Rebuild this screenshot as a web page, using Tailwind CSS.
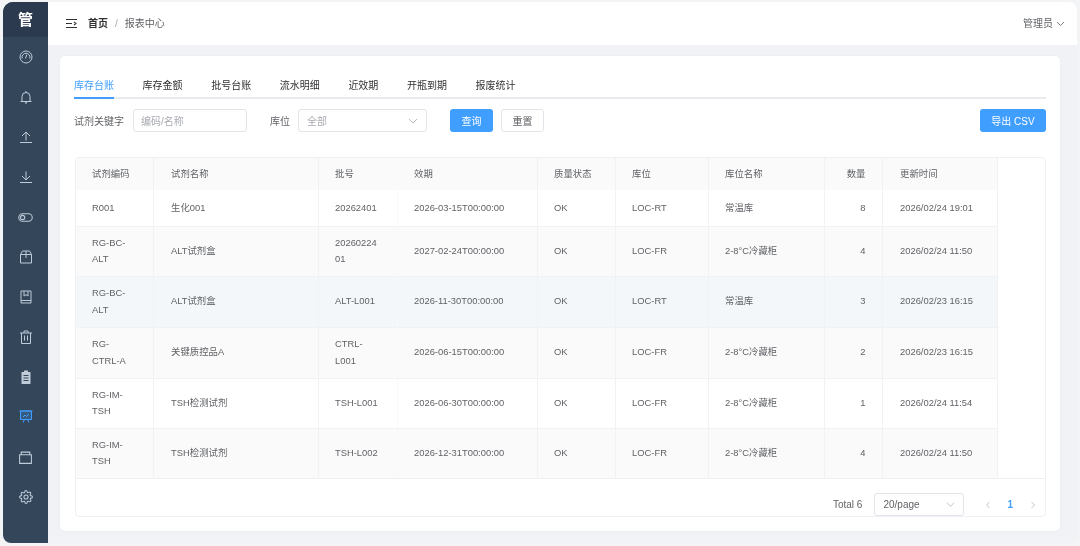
<!DOCTYPE html>
<html lang="zh">
<head>
<meta charset="utf-8">
<script src="https://cdn.jsdelivr.net/npm/@tailwindcss/browser@4"></script>
<title>报表中心</title>
</head>
<body class="m-0 bg-[#f3f4f5]">
<div class="h-[546px] w-[1080px] overflow-hidden pt-[2px] pr-[3px] pb-[3px] pl-[3px] font-['Liberation_Sans','Noto_Sans_CJK_SC',sans-serif] blur-[0.35px]">
  <div class="flex h-full overflow-hidden rounded-tl-[10px] rounded-tr-[8px] rounded-bl-[8px] rounded-br-[8px] bg-[#f0f2f5]">
    <aside class="flex w-[45px] shrink-0 flex-col bg-[#33465a]">
      <div class="flex h-[35px] items-center justify-center bg-[#2b3a4e] pt-[1px] text-[15px] font-bold text-white">管</div>
      <nav class="flex flex-col items-center text-[#bfcbd9]">
        <span class="flex h-[40px] items-center"><svg class="size-[14px]" viewBox="0 0 14 14" fill="none" stroke="currentColor" stroke-width="1"><circle cx="7" cy="7" r="6"/><path d="M3.200 8.500a4 4 0 1 1 7.600 0M7.800 4.600 6.600 8.400"/></svg></span>
        <span class="flex h-[40px] items-center"><svg class="size-[14px]" viewBox="0 0 14 14" fill="none" stroke="currentColor" stroke-width="1"><path d="M1.500 11.500h11M3 11.500V6.500a4 4 0 0 1 8 0v5M7 1v1.500"/><circle cx="7" cy="12.800" r=".6"/></svg></span>
        <span class="flex h-[40px] items-center"><svg class="size-[14px]" viewBox="0 0 14 14" fill="none" stroke="currentColor" stroke-width="1"><path d="M1 12.500h12M7 10.500V2.500M3 6l4-4 4 4"/></svg></span>
        <span class="flex h-[40px] items-center"><svg class="size-[14px]" viewBox="0 0 14 14" fill="none" stroke="currentColor" stroke-width="1"><path d="M1 12.500h12M7 1.500v8M3 6l4 4 4-4"/></svg></span>
        <span class="flex h-[40px] items-center"><svg class="size-[15px]" viewBox="0 0 14 14" fill="none" stroke="currentColor" stroke-width="1"><rect x=".7" y="3.500" width="12.600" height="7" rx="3.500"/><circle cx="4.300" cy="7" r="2"/></svg></span>
        <span class="flex h-[40px] items-center"><svg class="size-[14px]" viewBox="0 0 14 14" fill="none" stroke="currentColor" stroke-width="1"><path d="M1.500 4.500v8.500h11V4.500L10.500 1h-7zM1.500 4.500h11M7 1v7"/></svg></span>
        <span class="flex h-[40px] items-center"><svg class="size-[14px]" viewBox="0 0 14 14" fill="none" stroke="currentColor" stroke-width="1"><path d="M2 1h10v12H2zM2 10.500h10M5 1v5l2-1.300L9 6V1"/></svg></span>
        <span class="flex h-[40px] items-center"><svg class="size-[14px]" viewBox="0 0 14 14" fill="none" stroke="currentColor" stroke-width="1"><path d="M1 3h12M2.500 3v10.500h9V3M5 3V1h4v2M5.500 5.500v5M8.500 5.500v5"/></svg></span>
        <span class="flex h-[40px] items-center"><svg class="size-[14px]" viewBox="0 0 14 14"><path fill="currentColor" fill-rule="evenodd" d="M5 .5h4V2h2.500v12h-9V2H5zM4.500 5v1h5V5zm0 2.500v1h5v-1zm0 2.500v1h5v-1z"/></svg></span>
        <span class="flex h-[40px] items-center text-[#409eff]"><svg class="size-[14px]" viewBox="0 0 14 14" fill="none" stroke="currentColor" stroke-width="1"><path fill="currentColor" fill-opacity=".25" d="M1.500 1v8.500h11V1z"/><path d="M.5 1h13M4 12.500l1.500-3M10 12.500l-1.500-3M4 7l2-2 1.500 1.500L10 4"/></svg></span>
        <span class="flex h-[40px] items-center"><svg class="size-[15px]" viewBox="0 0 14 14" fill="none" stroke="currentColor" stroke-width="1"><path d="M1.500 4.500h11v8h-11zM3 4.500V2h8v2.500"/></svg></span>
        <span class="flex h-[40px] items-center"><svg class="size-[14px]" viewBox="0 0 24 24" fill="none" stroke="currentColor" stroke-width="1.800" stroke-linejoin="round"><circle cx="12" cy="12" r="3.500"/><path d="M19.400 15a1.650 1.650 0 0 0 .33 1.820l.06.06a2 2 0 1 1-2.830 2.830l-.06-.06a1.650 1.650 0 0 0-2.800 1.170V21a2 2 0 1 1-4 0v-.09a1.650 1.650 0 0 0-2.800-1.170l-.06.06a2 2 0 1 1-2.830-2.830l.06-.06a1.650 1.650 0 0 0-1.170-2.800H3a2 2 0 1 1 0-4h.09a1.650 1.650 0 0 0 1.170-2.800l-.06-.06a2 2 0 1 1 2.830-2.830l.06.06a1.650 1.650 0 0 0 2.800-1.170V3a2 2 0 1 1 4 0v.09a1.650 1.650 0 0 0 2.800 1.170l.06-.06a2 2 0 1 1 2.830 2.830l-.06.06a1.650 1.650 0 0 0 1.170 2.800H21a2 2 0 1 1 0 4h-.09a1.650 1.650 0 0 0-1.510 1.110z"/></svg></span>
      </nav>
    </aside>
    <div class="flex min-w-0 flex-1 flex-col">
      <header class="flex h-[43px] shrink-0 items-center bg-white pr-[12px] pl-[18px] text-[10px]">
        <svg class="mr-[11px] size-[11px] text-[#303133]" viewBox="0 0 11 11" fill="none" stroke="currentColor" stroke-width="1.100"><path d="M0 1.500h11M0 9.500h11M0 5.500h6M8 4l2 1.500L8 7"/></svg>
        <span class="font-bold text-[#303133]">首页</span>
        <span class="mx-[7px] text-[#a8abb2]">/</span>
        <span class="text-[#606266]">报表中心</span>
        <span class="ml-auto translate-x-[1px] text-[#606266]">管理员</span>
        <svg class="ml-[4px] size-[9px] text-[#606266]" viewBox="0 0 9 9" fill="none" stroke="currentColor" stroke-width=".8"><path d="m1 3 3.500 3.500L8 3"/></svg>
      </header>
      <main class="flex-1 pt-[11px] pr-[17px] pb-[12px] pl-[12px]">
        <section class="h-full rounded-[5px] bg-white px-[14px] pt-[20px] shadow-[0_0_3px_rgba(0,0,0,0.04)]">
          <div class="flex h-[23px] gap-[28.6px] border-b-2 border-[#e8eaee] pt-[1px] text-[10px] leading-[18px] text-[#303133]">
            <span class="relative h-[22px] text-[#409eff] after:absolute after:right-0 after:bottom-0 after:left-0 after:h-[2px] after:bg-[#409eff] after:content-['']">库存台账</span>
            <span>库存金额</span><span>批号台账</span><span>流水明细</span><span>近效期</span><span>开瓶到期</span><span>报废统计</span>
          </div>
          <div class="mt-[10px] flex h-[23px] items-center text-[10px] text-[#606266] [&>span]:pt-[2px]">
            <span class="w-[59px]">试剂关键字</span>
            <span class="flex h-[23px] w-[114px] items-center rounded-[3px] border border-[#e2e4e9] pl-[7px] text-[#a8abb2]">编码/名称</span>
            <span class="ml-[23px] w-[28px]">库位</span>
            <span class="flex h-[23px] w-[129px] items-center justify-between rounded-[3px] border border-[#e2e4e9] pr-[8px] pl-[8px] text-[#a8abb2]">全部<svg class="size-[10px] -translate-y-[1px]" viewBox="0 0 10 10" fill="none" stroke="currentColor" stroke-width=".8"><path d="m1 3 4 4 4-4"/></svg></span>
            <span class="ml-[23px] flex h-[23px] w-[43px] items-center justify-center rounded-[3px] bg-[#409eff] text-white">查询</span>
            <span class="ml-[8px] flex h-[23px] w-[43px] items-center justify-center rounded-[3px] border border-[#e2e4e9] text-[#606266]">重置</span>
            <span class="ml-auto flex h-[23px] w-[66px] items-center justify-center rounded-[3px] bg-[#409eff] text-white">导出 CSV</span>
          </div>
          <div class="mt-[25px] ml-[1px] h-[360px] w-[971px] overflow-hidden rounded-[4px] border border-[#eff0f3] text-[9.4px] text-[#606266]">
            <table class="w-[921px] table-fixed border-collapse leading-[16.500px]">
              <colgroup><col class="w-[77px]"><col class="w-[165px]"><col class="w-[79px]"><col class="w-[140px]"><col class="w-[78px]"><col class="w-[93px]"><col class="w-[116px]"><col class="w-[58px]"><col class="w-[115px]"></colgroup>
              <thead>
                <tr class="h-[32px] bg-[#fafafa] text-left [&>th]:border-r [&>th]:border-[#f1f2f4] [&>th]:pl-[16.500px] [&>th]:font-normal [&>th:nth-child(1)]:pl-[16px] [&>th:nth-child(2)]:pl-[17.500px] [&>th:nth-child(3)]:border-transparent [&>th:nth-child(9)]:pl-[17.500px]">
                  <th>试剂编码</th><th>试剂名称</th><th>批号</th><th>效期</th><th>质量状态</th><th>库位</th><th>库位名称</th><th class="text-right [&]:pr-[16px]">数量</th><th>更新时间</th>
                </tr>
              </thead>
              <tbody class="[&_td]:border-r [&_td]:border-[#f1f2f4] [&_td]:pl-[16.500px] [&_td:nth-child(1)]:pl-[16px] [&_td:nth-child(2)]:pl-[17.500px] [&_td:nth-child(3)]:border-[#f8f8f9] [&_td:nth-child(8)]:pr-[16px] [&_td:nth-child(8)]:text-right [&_td:nth-child(9)]:pl-[17.500px] [&_tr]:border-t [&_tr]:border-[#f1f2f4]">
                <tr class="h-[36px] border-t-0!"><td>R001</td><td>生化001</td><td>20262401</td><td>2026-03-15T00:00:00</td><td>OK</td><td>LOC-RT</td><td>常温库</td><td>8</td><td>2026/02/24 19:01</td></tr>
                <tr class="h-[50px] bg-[#fafafa]"><td>RG-BC-<br>ALT</td><td>ALT试剂盒</td><td>20260224<br>01</td><td>2027-02-24T00:00:00</td><td>OK</td><td>LOC-FR</td><td>2-8°C冷藏柜</td><td>4</td><td>2026/02/24 11:50</td></tr>
                <tr class="h-[51px] bg-[#f4f7fa]"><td>RG-BC-<br>ALT</td><td>ALT试剂盒</td><td>ALT-L001</td><td>2026-11-30T00:00:00</td><td>OK</td><td>LOC-RT</td><td>常温库</td><td>3</td><td>2026/02/23 16:15</td></tr>
                <tr class="h-[51px] bg-[#fafafa]"><td>RG-<br>CTRL-A</td><td>关键质控品A</td><td>CTRL-<br>L001</td><td>2026-06-15T00:00:00</td><td>OK</td><td>LOC-FR</td><td>2-8°C冷藏柜</td><td>2</td><td>2026/02/23 16:15</td></tr>
                <tr class="h-[50px]"><td>RG-IM-<br>TSH</td><td>TSH检测试剂</td><td>TSH-L001</td><td>2026-06-30T00:00:00</td><td>OK</td><td>LOC-FR</td><td>2-8°C冷藏柜</td><td>1</td><td>2026/02/24 11:54</td></tr>
                <tr class="h-[50px] bg-[#fafafa]"><td>RG-IM-<br>TSH</td><td>TSH检测试剂</td><td>TSH-L002</td><td>2026-12-31T00:00:00</td><td>OK</td><td>LOC-FR</td><td>2-8°C冷藏柜</td><td>4</td><td>2026/02/24 11:50</td></tr>
              </tbody>
            </table>
            <div class="h-[39px] border-t border-[#eff0f3] pt-[14px] pr-[8px] text-[10px]">
              <div class="flex h-[23px] items-center">
                <span class="ml-auto text-[#606266]">Total 6</span>
                <span class="ml-[12px] flex h-[23px] w-[90px] items-center justify-between rounded-[3px] border border-[#e2e4e9] pr-[8px] pl-[8px]">20/page<svg class="size-[9px] text-[#a8abb2]" viewBox="0 0 10 10" fill="none" stroke="currentColor" stroke-width=".8"><path d="m1 3 4 4 4-4"/></svg></span>
                <svg class="ml-[20px] size-[8px] text-[#c0c4cc]" viewBox="0 0 8 8" fill="none" stroke="currentColor"><path d="M5.500 1 2.500 4l3 3"/></svg>
                <span class="ml-[15px] font-bold text-[#409eff]">1</span>
                <svg class="ml-[16px] size-[8px] text-[#c0c4cc]" viewBox="0 0 8 8" fill="none" stroke="currentColor"><path d="m2.500 1 3 3-3 3"/></svg>
              </div>
            </div>
          </div>
        </section>
      </main>
    </div>
  </div>
</div>
</body>
</html>
